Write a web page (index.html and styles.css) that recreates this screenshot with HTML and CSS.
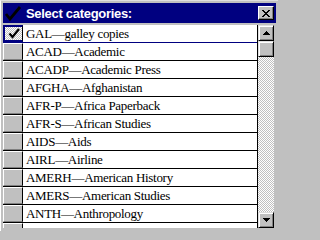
FILE: index.html
```html
<!DOCTYPE html>
<html>
<head>
<meta charset="utf-8">
<link rel="stylesheet" href="styles.css">
</head>
<body>
<div class="window">
  <div class="titlebar">
    <svg class="tick" width="18" height="16" viewBox="0 0 18 16"><path d="M2 9 L6 14 L16 2" fill="none" stroke="#000" stroke-width="2.8"/></svg>
    <span class="title">Select categories:</span>
    <span class="close"><svg width="8" height="7" viewBox="0 0 8 7"><path d="M0 0h2v1h-2zM6 0h2v1h-2zM1 1h2v1h-2zM5 1h2v1h-2zM2 2h4v1h-4zM3 3h2v1h-2zM2 4h4v1h-4zM1 5h2v1h-2zM5 5h2v1h-2zM0 6h2v1h-2zM6 6h2v1h-2z" fill="#000"/></svg></span>
  </div>
  <div class="body">
    <div class="list">
      <div class="row focused"><span class="box checked"><svg width="12" height="11" viewBox="0 0 12 11"><path d="M1.5 5.5 L4.5 9 L11 1" fill="none" stroke="#000" stroke-width="2.2"/></svg></span><span class="label">GAL—galley copies</span></div>
      <div class="row"><span class="box"></span><span class="label">ACAD—Academic</span></div>
      <div class="row"><span class="box"></span><span class="label">ACADP—Academic Press</span></div>
      <div class="row"><span class="box"></span><span class="label">AFGHA—Afghanistan</span></div>
      <div class="row"><span class="box"></span><span class="label">AFR-P—Africa Paperback</span></div>
      <div class="row"><span class="box"></span><span class="label">AFR-S—African Studies</span></div>
      <div class="row"><span class="box"></span><span class="label">AIDS—Aids</span></div>
      <div class="row"><span class="box"></span><span class="label">AIRL—Airline</span></div>
      <div class="row"><span class="box"></span><span class="label">AMERH—American History</span></div>
      <div class="row"><span class="box"></span><span class="label">AMERS—American Studies</span></div>
      <div class="row"><span class="box"></span><span class="label">ANTH—Anthropology</span></div>
      <div class="row"><span class="box"></span><span class="label">ANTIQ—Antiques</span></div>
    </div>
    <div class="scrollbar">
      <div class="sbtn"><svg width="7" height="4" viewBox="0 0 7 4"><path d="M3 0h1v1h1v1h1v1h1v1h-7v-1h1v-1h1v-1h1z" fill="#000"/></svg></div>
      <div class="thumb"></div>
      <div class="track"></div>
      <div class="sbtn"><svg width="7" height="4" viewBox="0 0 7 4"><path d="M0 0h7v1h-1v1h-1v1h-1v1h-1v-1h-1v-1h-1v-1h-1z" fill="#000"/></svg></div>
    </div>
  </div>
</div>
</body>
</html>
```
FILE: styles.css
```css
html, body {
  margin: 0;
  padding: 0;
}
body {
  width: 278px;
  height: 231px;
  overflow: hidden;
  background: #c0c0c0;
}
.window {
  box-sizing: border-box;
  width: 278px;
  height: 231px;
  padding: 2px 2px 3px 2px;
  border-top: 1px solid #dfdfdf;
  border-left: 1px solid #ffffff;
  display: flex;
  flex-direction: column;
  gap: 2px;
  background: #c0c0c0;
}
.titlebar {
  height: 20px;
  flex: none;
  background: #000080;
  display: flex;
  align-items: center;
  padding: 0 2px 0 1px;
}
.tick {
  display: block;
  margin-right: 4px;
}
.title {
  font-family: "Liberation Sans", Arial, sans-serif;
  font-weight: bold;
  font-size: 13px;
  letter-spacing: -0.3px;
  color: #fff;
  flex: 1;
}
.close {
  box-sizing: border-box;
  width: 16px;
  height: 14px;
  background: #c0c0c0;
  border-top: 1px solid #fff;
  border-left: 1px solid #fff;
  border-right: 1px solid #000;
  border-bottom: 1px solid #000;
  box-shadow: inset -1px -1px 0 #808080;
  display: flex;
  align-items: center;
  justify-content: center;
}
.close svg { display: block; }
.body {
  flex: 1;
  display: flex;
  min-height: 0;
}
.list {
  flex: 1;
  overflow: hidden;
  background: #fff;
  border-right: 1px solid #000;
}
.row {
  display: flex;
  height: 17px;
  border-bottom: 1px solid #000;
}
.box {
  box-sizing: border-box;
  width: 20px;
  flex: none;
  background: #c0c0c0;
  border-top: 1px solid #fff;
  border-left: 1px solid #fff;
  border-bottom: 1px solid #808080;
  border-right: 1px solid #000;
  display: flex;
  align-items: center;
  justify-content: center;
}
.row.focused {
  border-bottom-color: #000080;
}
.box.checked {
  border: 2px solid #000080;
  border-right: 1px solid #000;
  background: repeating-conic-gradient(#c0c0c0 0 25%, #ffffff 0 50%) 0 0 / 2px 2px;
}
.box svg { display: block; }
.label {
  font-family: "Liberation Serif", "Times New Roman", serif;
  font-size: 13px;
  line-height: 17px;
  letter-spacing: -0.3px;
  padding-left: 3px;
  color: #000;
  white-space: nowrap;
}
.scrollbar {
  width: 16px;
  flex: none;
  display: flex;
  flex-direction: column;
  margin-right: 2px;
}
.sbtn, .thumb {
  box-sizing: border-box;
  height: 16px;
  flex: none;
  background: #c0c0c0;
  border-top: 1px solid #dfdfdf;
  border-left: 1px solid #dfdfdf;
  border-right: 1px solid #000;
  border-bottom: 1px solid #000;
  box-shadow: inset 1px 1px 0 #fff, inset -1px -1px 0 #808080;
  display: flex;
  align-items: center;
  justify-content: center;
}
.sbtn svg { display: block; }
.track {
  flex: 1;
  background: repeating-conic-gradient(#c0c0c0 0 25%, #ffffff 0 50%) 0 0 / 2px 2px;
}
```
